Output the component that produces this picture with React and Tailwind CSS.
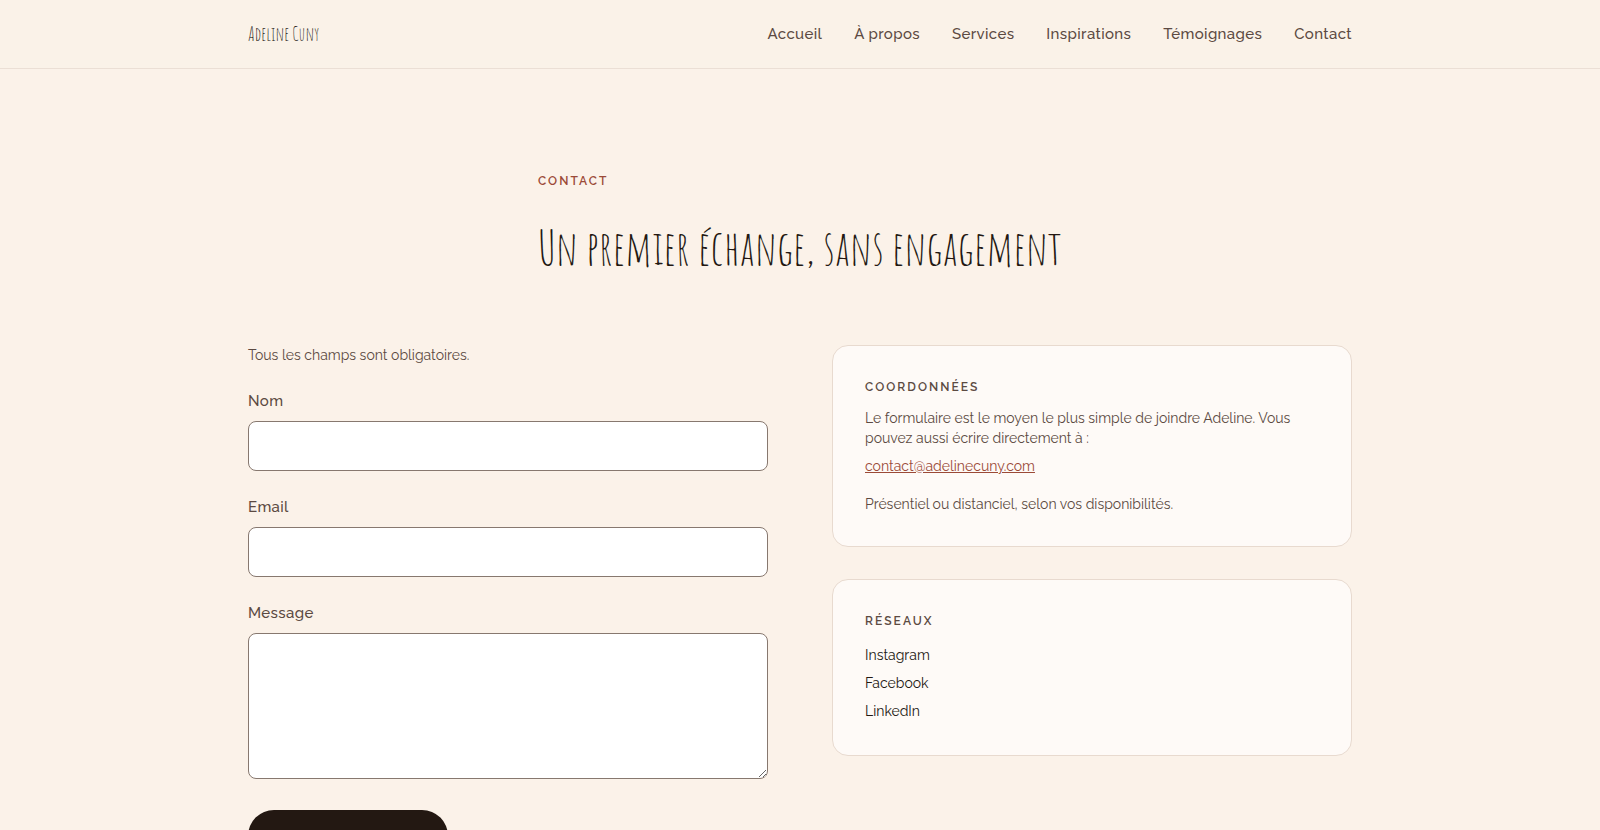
const NAV_LINKS = [
  { href: '#accueil', label: 'Accueil' },
  { href: '#a-propos', label: 'À propos' },
  { href: '#services', label: 'Services' },
  { href: '#inspirations', label: 'Inspirations' },
  { href: '#temoignages', label: 'Témoignages' },
  { href: '#contact', label: 'Contact' },
];

const SOCIAL_LINKS = [
  { href: '#instagram', label: 'Instagram' },
  { href: '#facebook', label: 'Facebook' },
  { href: '#linkedin', label: 'LinkedIn' },
];

const fieldClass =
  'block w-full rounded-lg border border-[#87786f] bg-white px-4 text-base text-[#231812] outline-none focus:border-[#9b4a38]';

function Header() {
  return (
    <header className="border-b border-[#ebdfd5] bg-[#faf2e8]">
      <div className="mx-auto flex h-17 max-w-[1152px] items-center justify-between px-6">
        <a href="#accueil" className="font-['Amatic_SC','Lato',sans-serif] text-[19px] leading-7 text-[#231812]">
          Adeline Cuny
        </a>
        <nav aria-label="Navigation principale" className="flex gap-8">
          {NAV_LINKS.map((link) => (
            <a
              key={link.href}
              href={link.href}
              className="text-[15px] font-medium tracking-wide text-[#5c4a42] hover:text-[#9b4a38]"
            >
              {link.label}
            </a>
          ))}
        </nav>
      </div>
    </header>
  );
}

function Field({ id, label, children }) {
  return (
    <div>
      <label htmlFor={id} className="mb-2 block text-[15px] leading-6 font-medium tracking-wide text-[#5c4a42]">
        {label}
      </label>
      {children}
    </div>
  );
}

function ContactForm() {
  return (
    <form onSubmit={(e) => e.preventDefault()}>
      <p className="mb-6 text-sm text-[#5c4a42]">Tous les champs sont obligatoires.</p>
      <div className="flex flex-col gap-6">
        <Field id="nom" label="Nom">
          <input id="nom" name="nom" type="text" required className={`${fieldClass} h-[50px]`} />
        </Field>
        <Field id="email" label="Email">
          <input id="email" name="email" type="email" required className={`${fieldClass} h-[50px]`} />
        </Field>
        <Field id="message" label="Message">
          <textarea
            id="message"
            name="message"
            required
            className={`${fieldClass} h-[146px] resize-y py-3`}
          />
        </Field>
      </div>
      <button
        type="submit"
        aria-label="Envoyer"
        className="mt-[31px] h-13 w-[200px] rounded-full bg-[#231812]"
      />
    </form>
  );
}

function Card({ title, children }) {
  return (
    <section className="rounded-2xl border border-[#e8dacf] bg-[#fefaf7] p-8">
      <h2 className="mb-3 text-xs leading-[18px] font-semibold tracking-[0.17em] text-[#5c4a42] uppercase">
        {title}
      </h2>
      {children}
    </section>
  );
}

export default function App() {
  return (
    <div className="min-h-screen bg-[#fbf2e9] font-['Raleway','Lato',sans-serif]">
      <Header />
      <main className="mx-auto max-w-[1152px] px-6 pt-24 pb-24">
        <div className="mx-auto mb-17 w-fit">
          <p className="mb-5 text-xs leading-8 font-semibold tracking-[0.17em] text-[#9b4a38] uppercase">
            Contact
          </p>
          <h1 className="font-['Amatic_SC','Lato',sans-serif] text-5xl leading-[60px] text-[#231812]">
            Un premier échange, sans engagement
          </h1>
        </div>
        <div className="grid items-start gap-16 md:grid-cols-2">
          <ContactForm />
          <div className="flex flex-col gap-8">
            <Card title="Coordonnées">
              <p className="text-sm text-[#5c4a42]">
                Le formulaire est le moyen le plus simple de joindre Adeline. Vous pouvez aussi écrire directement à :
              </p>
              <a
                href="mailto:contact@adelinecuny.com"
                className="mt-2 block w-fit text-sm text-[#9b4a38] underline"
              >
                contact@adelinecuny.com
              </a>
              <p className="mt-[18px] text-sm text-[#5c4a42]">Présentiel ou distanciel, selon vos disponibilités.</p>
            </Card>
            <Card title="Réseaux">
              <ul className="flex flex-col gap-2 pt-[3px] pb-[2px] text-sm text-[#231812]">
                {SOCIAL_LINKS.map((link) => (
                  <li key={link.href}>
                    <a href={link.href} className="hover:text-[#9b4a38]">
                      {link.label}
                    </a>
                  </li>
                ))}
              </ul>
            </Card>
          </div>
        </div>
      </main>
    </div>
  );
}
